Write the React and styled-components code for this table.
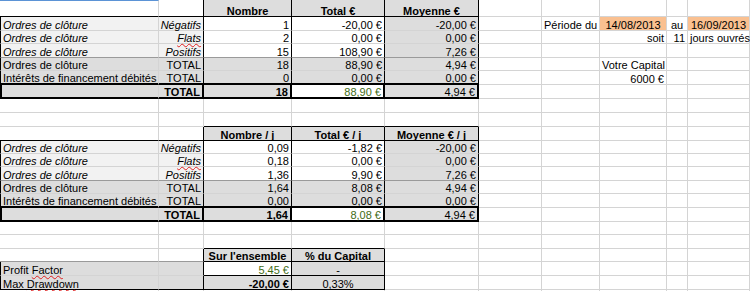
import React from 'react'
import styled, { createGlobalStyle } from 'styled-components'

const GlobalStyle = createGlobalStyle`
  html, body {
    margin: 0;
    padding: 0;
    background: #fff;
    overflow: hidden;
  }
  body {
    font-family: "Liberation Sans", Arial, sans-serif;
  }
`

const COLS = [159, 45, 88, 93, 94, 63, 58, 67, 21, 62]
const ROWS = [17, 14, 13, 14, 13, 14, 14, 14, 14, 14, 13, 13, 14, 13, 14, 14, 13, 14, 13, 14, 14, 14]
const LETTERS = ['A', 'B', 'C', 'D', 'E', 'F', 'G', 'H', 'I', 'J']

const GRID = '1px solid #d4d4d4'
const DARK = '1px solid #000'
const MID = '1px solid #9a9a9a'
const THICK = '2px solid #000'
const PALE = '#f2f2f2'
const GRAY = '#dddddd'
const PEACH = '#fac090'
const GREEN = '#3f6c14'

const Sheet = styled.div`
  display: grid;
  grid-template-columns: ${COLS.map(w => w + 'px').join(' ')};
  grid-template-rows: ${ROWS.map(h => h + 'px').join(' ')};
  width: 750px;
  height: 291px;
  overflow: hidden;
  font-size: 11px;
  color: #000;
`

const Cell = styled.div`
  box-sizing: border-box;
  display: flex;
  align-items: flex-end;
  justify-content: ${p => p.$align === 'right' ? 'flex-end' : p.$align === 'center' ? 'center' : 'flex-start'};
  padding: 0 2px;
  line-height: 10px;
  white-space: nowrap;
  background: ${p => p.$bg || '#fff'};
  border-right: ${p => p.$r || GRID};
  border-bottom: ${p => p.$b || GRID};
  border-left: ${p => p.$l || 'none'};
  border-top: ${p => p.$t || 'none'};
  font-weight: ${p => p.$bold ? 700 : 400};
  font-style: ${p => p.$italic ? 'italic' : 'normal'};
  color: ${p => p.$color || '#000'};
`

const Value = styled.span`
  white-space: pre;
`

// spell-check underline sits over the gridline, so lift it above the next row
const Squiggle = styled.span`
  position: relative;
  z-index: 1;
  text-decoration: underline wavy #e02020;
  text-decoration-thickness: 1px;
  text-underline-offset: 1px;
  text-decoration-skip-ink: none;
`

const HEAD = { bg: GRAY, bold: true, align: 'center', r: DARK, b: DARK }

// one "Ordres de clôture" block: header row, 5 detail rows, total row
const block = (heads, data, total) => {
  const rows = [{
    A: { b: DARK },
    B: { b: DARK, r: DARK },
    C: { ...HEAD, text: heads[0] },
    D: { ...HEAD, text: heads[1] },
    E: { ...HEAD, text: heads[2] },
  }]
  data.forEach(([label, kind, n, sum, avg], i) => {
    const detail = i < 3
    const bg = detail ? PALE : GRAY
    const b = i === 2 ? MID : i === 4 ? THICK : undefined
    rows.push({
      A: { text: label, bg, italic: detail, l: DARK, b },
      B: { text: kind, bg, italic: detail, align: 'right', r: DARK, b },
      C: { text: n, bg: detail ? '#fff' : GRAY, align: 'right', r: DARK, b },
      D: { text: sum, bg: detail ? '#fff' : GRAY, align: 'right', r: DARK, b },
      E: { text: avg, bg: GRAY, align: 'right', r: DARK, b },
    })
  })
  rows.push({
    A: { bg: GRAY, l: THICK, b: THICK },
    B: { text: 'TOTAL', bg: GRAY, bold: true, align: 'right', r: THICK, b: THICK },
    C: { text: total[0], bg: GRAY, bold: true, align: 'right', r: THICK, b: THICK },
    D: { text: total[1], color: GREEN, align: 'right', r: THICK, b: THICK },
    E: { text: total[2], bg: GRAY, align: 'right', r: THICK, b: THICK },
  })
  return rows
}

const ORDRES = 'Ordres de clôture'
const INTERETS = 'Intérêts de financement débités'
const FLATS = <Squiggle>Flats</Squiggle>

const first = block(
  ['Nombre', 'Total €', 'Moyenne €'],
  [
    [ORDRES, 'Négatifs', '1', '-20,00 €', '-20,00 €'],
    [ORDRES, FLATS, '2', '0,00 €', '0,00 €'],
    [ORDRES, 'Positifs', '15', '108,90 €', '7,26 €'],
    [ORDRES, 'TOTAL', '18', '88,90 €', '4,94 €'],
    [INTERETS, 'TOTAL', '0', '0,00 €', '0,00 €'],
  ],
  ['18', '88,90 €', '4,94 €']
)

const second = block(
  ['Nombre / j', 'Total € / j', 'Moyenne € / j'],
  [
    [ORDRES, 'Négatifs', '0,09', '-1,82 €', '-20,00 €'],
    [ORDRES, FLATS, '0,18', '0,00 €', '0,00 €'],
    [ORDRES, 'Positifs', '1,36', '9,90 €', '7,26 €'],
    [ORDRES, 'TOTAL', '1,64', '8,08 €', '4,94 €'],
    [INTERETS, 'TOTAL', '0,00', '0,00 €', '0,00 €'],
  ],
  ['1,64', '8,08 €', '4,94 €']
)

// period / capital inputs on the right
first[0].A = { ...first[0].A, t: '1px solid #5b93d6' }
Object.assign(first[1], {
  G: { text: 'Période du' },
  H: { text: '14/08/2013', bg: PEACH, align: 'center' },
  I: { text: 'au', align: 'center' },
  J: { text: '16/09/2013', bg: PEACH, align: 'center' },
})
Object.assign(first[2], {
  H: { text: 'soit', align: 'right' },
  I: { text: '11', align: 'right' },
  J: { text: 'jours ouvrés' },
})
first[4].H = { text: 'Votre Capital' }
first[5].H = { text: '6000 €', align: 'right' }

const SHEET = [
  ...first,
  {},
  { C: { b: DARK }, D: { b: DARK }, E: { b: DARK } },
  ...second,
  {},
  { C: { b: DARK }, D: { b: DARK } },
  {
    A: { b: MID },
    B: { r: DARK, b: MID },
    C: { ...HEAD, text: "Sur l'ensemble" },
    D: { ...HEAD, text: '% du Capital' },
  },
  {
    A: { text: <>Profit <Squiggle>Factor</Squiggle></>, bg: GRAY, l: DARK },
    B: { bg: GRAY, r: DARK },
    C: { text: '5,45 €', color: GREEN, align: 'right', r: DARK, b: DARK },
    D: { text: '-', bg: GRAY, align: 'center', r: DARK, b: DARK },
  },
  {
    A: { text: <>Max <Squiggle>Drawdown</Squiggle></>, bg: GRAY, l: DARK, b: DARK },
    B: { bg: GRAY, r: DARK, b: DARK },
    C: { text: '-20,00 €', bg: GRAY, bold: true, align: 'right', r: DARK, b: DARK },
    D: { text: '0,33%', bg: GRAY, align: 'center', r: DARK, b: DARK },
  },
  {},
]

const App = () => {
  return (
    <>
      <GlobalStyle />
      <Sheet>
        {SHEET.map((row, ri) => LETTERS.map(L => {
          const c = row[L] || {}
          return (
            <Cell
              key={ri + L}
              $bg={c.bg}
              $align={c.align}
              $bold={c.bold}
              $italic={c.italic}
              $color={c.color}
              $r={c.r}
              $b={c.b}
              $l={c.l}
              $t={c.t}
            >
              {c.text != null && <Value>{c.text}</Value>}
            </Cell>
          )
        }))}
      </Sheet>
    </>
  )
}

export default App
